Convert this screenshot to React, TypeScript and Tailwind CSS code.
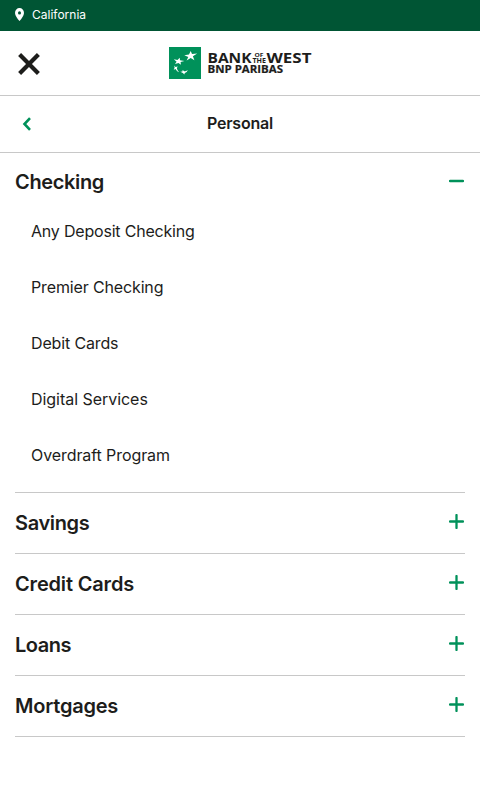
const checkingLinks = [
  { label: 'Any Deposit Checking', tracking: 'tracking-[-0.2px]' },
  { label: 'Premier Checking', tracking: 'tracking-[-0.14px]' },
  { label: 'Debit Cards', tracking: 'tracking-[-0.14px]' },
  { label: 'Digital Services', tracking: 'tracking-[-0.04px]' },
  { label: 'Overdraft Program', tracking: 'tracking-[-0.08px]' },
];

const sections = [
  { label: 'Savings', tracking: 'tracking-[-0.35px]' },
  { label: 'Credit Cards', tracking: 'tracking-[-0.17px]' },
  { label: 'Loans', tracking: 'tracking-[-0.5px]' },
  { label: 'Mortgages', tracking: 'tracking-[-0.22px]' },
];

function PinIcon() {
  return (
    <svg width="9" height="13" viewBox="0 0 9 12" preserveAspectRatio="none" className="-mt-px block shrink-0">
      <path fill="#fff" fillRule="evenodd" d="M4.5 0A4.5 4.5 0 0 0 0 4.5C0 7 2.4 9.6 4.5 12 6.600 9.600 9 7 9 4.500A4.500 4.500 0 0 0 4.500 0Zm0 3a1.500 1.500 0 1 1 0 3 1.500 1.500 0 0 1 0-3Z" />
    </svg>
  );
}

function Logo() {
  return (
    <svg width="143" height="32" viewBox="0 0 143 32" className="block" role="img" aria-label="Bank of the West BNP Paribas">
      <rect width="32" height="32" fill="#00915a" />
      <g fill="#fff">
        <path d="M15.300 8.300 20 7.600 21.700 4l1.300 3 5.200-.4-4.300 2.700 1.500 4-3.700-2.300-4.100 2.600 1.700-3.700Z" />
        <path d="M4.800 12.300 8.500 13l2.200-2.200.3 2.400 4.400.9-3.800.9.300 2.800-2.400-1.900-3.500 1.200 1.600-2.300Z" />
        <path d="m5.300 18.600 1.200 1.300 2.300-.5-1 1.700c.3 1.500 1.100 2.900 2.400 4.100-1.700-.6-2.900-1.700-3.600-3.200l-1.900.7.900-1.900Z" />
        <path d="m11.300 24.700 2.100-.1.300-1.500 1.500 1.200c1.400 0 2.600-.5 3.500-1.300-.4 1.500-1.400 2.600-2.900 3l-.5 1.400-1.400-1.500Z" />
      </g>
      <g fill="#1d1d1b" fontFamily='"Open Sans", "Noto Sans", sans-serif' fontWeight="700">
        <text x="38.500" y="16" fontSize="13.500" textLength="44" lengthAdjust="spacingAndGlyphs">BANK</text>
        <text x="85.500" y="10" fontSize="6" textLength="9" lengthAdjust="spacingAndGlyphs">OF</text>
        <text x="83.500" y="16" fontSize="6.500" textLength="13.500" lengthAdjust="spacingAndGlyphs">THE</text>
        <text x="97.500" y="16" fontSize="13.500" textLength="45" lengthAdjust="spacingAndGlyphs">WEST</text>
        <text x="38.500" y="26" fontSize="9.900" textLength="75.500" lengthAdjust="spacingAndGlyphs" stroke="#1d1d1b" strokeWidth="0.200">BNP PARIBAS</text>
      </g>
    </svg>
  );
}

function ToggleIcon({ open = false }: { open?: boolean }) {
  return (
    <svg width="15" height="15" viewBox="0 0 15 15" className="-mt-[3px] block shrink-0" fill="none" stroke="#00915a" strokeWidth="2.300" strokeLinecap="round">
      {open ? <path d="M1 8h13" /> : <path d="M1 7.500h13M7.500 1v13" />}
    </svg>
  );
}

export default function App() {
  return (
    <div className="min-h-[800px] w-full bg-white font-['Inter',sans-serif] text-[#1d1d1b]">
      <div className="flex h-[31px] items-center gap-2 bg-[#005534] pb-[2px] pl-[15px] text-xs text-white">
        <PinIcon />
        <span>California</span>
      </div>
      <header className="grid h-[65px] grid-cols-[1fr_143px_1fr] items-center border-b border-[#c8c8c8]">
        <button aria-label="Close" className="ml-[18px] mt-[2px] justify-self-start">
          <svg width="22" height="22" viewBox="0 0 22 22" className="block" stroke="#1d1d1b" strokeWidth="4.200">
            <path d="M1.600 1.600 20.400 20.400M20.400 1.600 1.600 20.400" />
          </svg>
        </button>
        <div className="-mt-px">
          <Logo />
        </div>
      </header>
      <div className="grid h-[57px] grid-cols-[1fr_auto_1fr] items-center border-b border-[#c8c8c8] pb-[2px]">
        <button aria-label="Back" className="ml-[22px] mt-px justify-self-start">
          <svg width="10" height="14" viewBox="0 0 10 14" className="block" fill="none" stroke="#00915a" strokeWidth="2.600">
            <path d="M8 1.200 2.500 7 8 12.800" />
          </svg>
        </button>
        <span className="text-base font-semibold tracking-[-0.2px]">Personal</span>
      </div>
      <main className="px-[15px]">
        <section className="h-[340px] border-b border-[#c8c8c8]">
          <div className="flex h-[50px] items-center justify-between pr-px pt-[7px]">
            <h2 className="text-xl font-semibold tracking-[-0.35px]">Checking</h2>
            <ToggleIcon open />
          </div>
          <ul className="pl-4">
            {checkingLinks.map((item) => (
              <li key={item.label} className="flex h-14 items-center text-base">
                <span className={item.tracking}>{item.label}</span>
              </li>
            ))}
          </ul>
        </section>
        {sections.map((item) => (
          <section key={item.label} className="flex h-[61px] items-center justify-between border-b border-[#c8c8c8] pr-px">
            <h2 className={`text-xl font-semibold ${item.tracking}`}>{item.label}</h2>
            <ToggleIcon />
          </section>
        ))}
      </main>
    </div>
  );
}
